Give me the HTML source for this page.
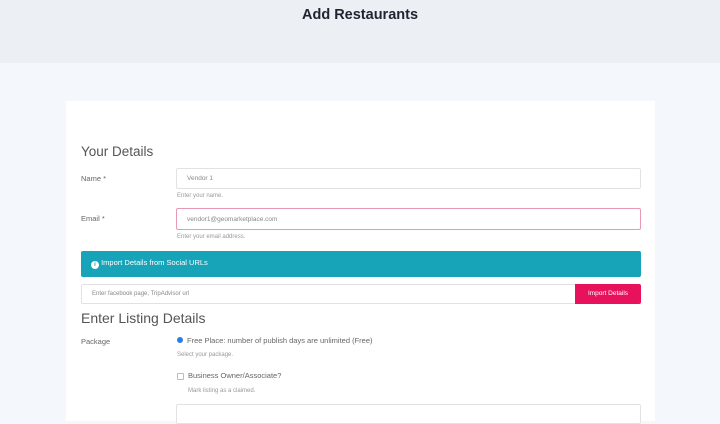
<!DOCTYPE html>
<html><head><meta charset="utf-8"><style>
*{margin:0;padding:0;box-sizing:border-box}
body{width:720px;height:410px;overflow:hidden;background:#f4f7fb;font-family:"Liberation Sans",sans-serif;position:relative;color:#555}
.hdr{position:absolute;left:0;top:0;width:720px;height:63px;background:#eceff4}
.hdr h1{position:absolute;top:7px;width:100%;text-align:center;font-size:14.5px;font-weight:bold;color:#1f2430}
.card{position:absolute;left:66px;top:101px;width:589px;height:320px;background:#fff}
.a{position:absolute;white-space:nowrap}
.h{font-size:13.5px;color:#555;font-weight:300}
.lbl{font-size:7.5px;color:#666}
.help{font-size:6px;color:#999}
.inp{position:absolute;border:1px solid #e2e2e2;border-radius:2px;background:#fff;font-size:6.5px;color:#888;padding-left:10px;display:flex;align-items:center}
</style></head><body>
<div class="hdr"><h1>Add Restaurants</h1></div>
<div class="card"></div>
<div class="a h" style="left:81px;top:144px">Your Details</div>
<div class="a lbl" style="left:81px;top:174px">Name *</div>
<div class="inp" style="left:176px;top:168px;width:465px;height:21px">Vendor 1</div>
<div class="a help" style="left:177px;top:193px">Enter your name.</div>
<div class="a lbl" style="left:81px;top:214px">Email *</div>
<div class="inp" style="left:176px;top:208px;width:465px;height:22px;border:1.5px solid #e89ab2">vendor1@geomarketplace.com</div>
<div class="a help" style="left:177px;top:234px">Enter your email address.</div>
<div class="a" style="left:81px;top:251px;width:560px;height:26px;background:#17a3b8;border-radius:2px;color:#fff;font-size:7.5px;padding:7px 0 0 10px"><span style="display:inline-block;width:8px;height:8px;border-radius:50%;background:#fff;color:#17a3b8;font-size:6px;text-align:center;line-height:8px;font-weight:bold;vertical-align:-1px">i</span> Import Details from Social URLs</div>
<div class="inp" style="left:81px;top:284px;width:495px;height:20px;font-size:6px">Enter facebook page, TripAdvisor url</div>
<div class="a" style="left:575px;top:284px;width:66px;height:20px;background:#e8125c;color:#fff;font-size:6.5px;text-align:center;line-height:20px;border-radius:0 2px 2px 0">Import Details</div>
<div class="a h" style="left:81px;top:310px;font-size:14px">Enter Listing Details</div>
<div class="a lbl" style="left:81px;top:337px">Package</div>
<div class="a" style="left:177px;top:337px;width:6px;height:6px;border-radius:50%;background:#2a7fe0"></div>
<div class="a lbl" style="left:187px;top:336px">Free Place: number of publish days are unlimited (Free)</div>
<div class="a help" style="left:177px;top:352px">Select your package.</div>
<div class="a" style="left:177px;top:373px;width:7px;height:7px;border:1px solid #bbb;border-radius:1px"></div>
<div class="a lbl" style="left:188px;top:371px">Business Owner/Associate?</div>
<div class="a help" style="left:188px;top:388px">Mark listing as a claimed.</div>
<div class="inp" style="left:176px;top:404px;width:465px;height:20px"></div>
</body></html>
